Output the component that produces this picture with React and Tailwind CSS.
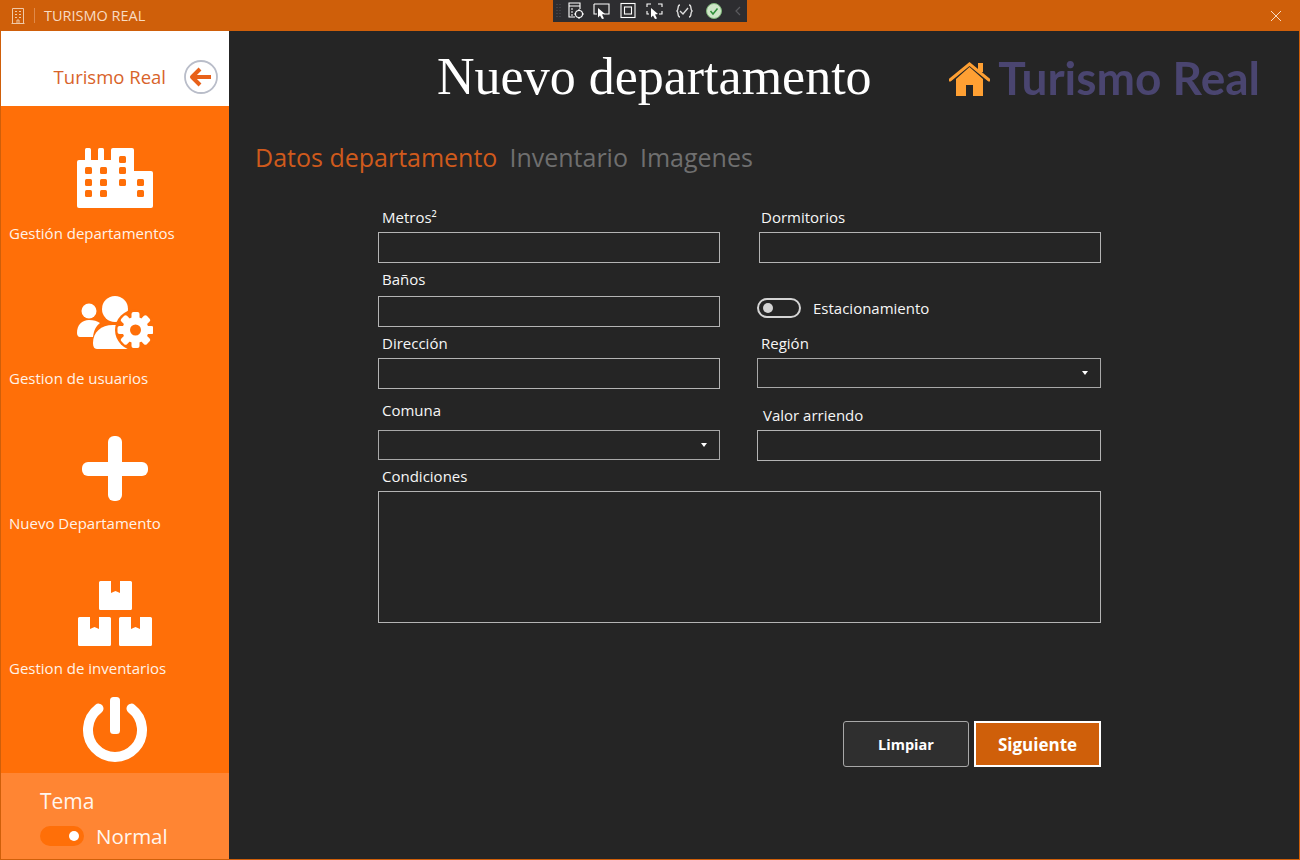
import React from "react";

const ui = { fontFamily: '"Open Sans", "Noto Sans", sans-serif' };

function BuildingIcon() {
  const windows = [
    [8, 19], [8, 31], [8, 42], [23, 19], [23, 31], [23, 42],
    [42, 8], [42, 19], [42, 31], [60, 31], [60, 42],
  ];
  return (
    <svg width="76" height="61" viewBox="0 0 76 61">
      <rect x="8" y="0" width="6" height="20" rx="1.5" fill="#fff" />
      <rect x="21" y="0" width="6" height="20" rx="1.5" fill="#fff" />
      <rect x="34" y="0" width="23" height="30" rx="2" fill="#fff" />
      <rect x="0" y="12" width="57" height="48" rx="2" fill="#fff" />
      <rect x="40" y="23" width="36" height="37" rx="2" fill="#fff" />
      {windows.map(([x, y]) => (
        <rect key={`${x}-${y}`} x={x} y={y} width="7" height="7" rx="1.5" fill="#ff6f08" />
      ))}
    </svg>
  );
}

function UsersIcon() {
  const teeth = [0, 45, 90, 135, 180, 225, 270, 315];
  return (
    <svg width="76" height="54" viewBox="0 0 76 54">
      <circle cx="12" cy="15" r="7.500" fill="#fff" />
      <path d="M0 37c0-8 5-13 12-13 5 0 8 1 11 3-4 3-6 7-7 14H3c-2 0-3-2-3-4z" fill="#fff" />
      <circle cx="38" cy="13" r="13" fill="#fff" />
      <path d="M16 47c0-11 8-18 20-18h4c8 0 14 4 17 10v14H20c-3 0-4-3-4-6z" fill="#fff" />
      <circle cx="58.500" cy="34" r="20.500" fill="#ff6f08" />
      {teeth.map((a) => (
        <rect key={a} x="54.500" y="16" width="8" height="8" rx="2" fill="#fff" transform={`rotate(${a} 58.500 34)`} />
      ))}
      <circle cx="58.500" cy="34" r="13" fill="#fff" />
      <circle cx="58.500" cy="34" r="5.500" fill="#ff6f08" />
    </svg>
  );
}

function PlusIcon() {
  return (
    <svg width="66" height="65" viewBox="0 0 66 65">
      <rect x="26" y="0" width="14" height="65" rx="6" fill="#fff" />
      <rect x="0" y="26" width="66" height="14" rx="6" fill="#fff" />
    </svg>
  );
}

function BoxesIcon() {
  const box = "M1.500 0H12V12L16.500 10 21 12V0h10.500A1.500 1.500 0 0 1 33 1.500v26a1.500 1.500 0 0 1-1.500 1.500h-30A1.500 1.500 0 0 1 0 27.500v-26A1.500 1.500 0 0 1 1.500 0z";
  return (
    <svg width="75" height="65" viewBox="0 0 75 65">
      <path d={box} transform="translate(21 0)" fill="#fff" />
      <path d={box} transform="translate(0 36)" fill="#fff" />
      <path d={box} transform="translate(41 36)" fill="#fff" />
    </svg>
  );
}

function PowerIcon() {
  return (
    <svg width="66" height="66" viewBox="0 0 66 66">
      <path d="M16.500 11.600a27 27 0 1 0 33 0" fill="none" stroke="#fff" strokeWidth="10" strokeLinecap="round" />
      <rect x="28" y="0" width="10" height="37" rx="3.500" fill="#fff" />
    </svg>
  );
}

function NavItem({ icon, label }) {
  return (
    <div className="h-[145px] flex flex-col">
      <div className="h-[70px] mt-[37px] flex items-center justify-center">{icon}</div>
      <div className="h-6 mt-2 pl-2 text-[15px] leading-6 text-[#fff3e8]">{label}</div>
    </div>
  );
}

function Toolbar() {
  const s = { fill: "none", stroke: "#fff", strokeWidth: 1.1 };
  return (
    <div className="absolute left-[553px] top-0 w-[194px] h-[22px] bg-[#2d2d30] flex items-center pl-[3px]">
      <svg width="188" height="18" viewBox="-12 0 188 18">
        <path d="M-11 2v14M-8 2v14" fill="none" stroke="#55555a" strokeWidth="1" strokeDasharray="1 2" />
        <path d="M1 1h11v3H1zM1 4v11h6M12 4v3" {...s} />
        <path d="M3 7h2M3 10h2M3 13h2" {...s} />
        <circle cx="11" cy="12" r="3.500" {...s} />
        <path d="M11 7v2M11 15v2M6 12h2M14 12h2" {...s} />
        <path d="M26 2h15v10h-5M26 2v10h3" {...s} />
        <path d="M30 6l7 6-3 .5 2 4-2 .5-2-3.500-2 2z" fill="#fff" />
        <rect x="53" y="1.500" width="14" height="14" {...s} />
        <rect x="56.500" y="5" width="7" height="7" {...s} />
        <path d="M79 5V2h4M90 2h4v3M79 9v3h2M94 9v3h-3" {...s} />
        <path d="M83 6l7 6-3 .5 2 4-2 .5-2-3.500-2 2z" fill="#fff" />
        <path d="M112 3c-3 0-1 4-3 6 2 2 0 6 3 6M121 3c3 0 1 4 3 6-2 2 0 6-3 6" fill="none" stroke="#ddd" strokeWidth="1.400" />
        <path d="M112 9l3 3 5-6" fill="none" stroke="#ddd" strokeWidth="1.400" />
        <circle cx="146" cy="9" r="7.500" fill="#cfe6c8" stroke="#7fb77a" />
        <path d="M142.500 9l2.500 3 4.500-5.500" fill="none" stroke="#2f8f3a" strokeWidth="1.500" />
        <path d="M172 5l-4 4 4 4" fill="none" stroke="#5a5a5e" strokeWidth="1.200" />
      </svg>
    </div>
  );
}

function Label({ children, className = "" }) {
  return <div className={`text-[15px] leading-5 text-[#f6f6f6] ${className}`}>{children}</div>;
}

function Field({ className = "" }) {
  return <div className={`border border-[#b4b4b4] bg-[#252525] ${className}`} />;
}

function SelectBox({ className = "" }) {
  return (
    <div className={`border border-[#a8a8a8] bg-[#252525] flex items-center justify-end pr-[12px] ${className}`}>
      <div className="w-0 h-0 border-l-[3px] border-r-[3px] border-t-[4px] border-l-transparent border-r-transparent border-t-white" />
    </div>
  );
}

export default function App() {
  return (
    <div className="w-[1300px] h-[860px] flex flex-col relative overflow-hidden bg-[#cf5f0a]" style={ui}>
      <div className="h-[31px] shrink-0 flex items-center bg-[#cf5f0a] pl-[11px] pr-[19px]">
        <svg width="14" height="16" viewBox="0 0 14 16" fill="none" stroke="#f0c9a8" strokeWidth="1">
          <path d="M1.500.5h11v15h-11zM.5 15.500h13" />
          <path d="M4 3.500h2M8 3.500h2M4 6.500h2M8 6.500h2M4 9.500h2M8 9.500h2M6 15v-3h2v3" />
        </svg>
        <div className="w-px h-[15px] bg-[#e08a4a] ml-[9px] mr-[9px]" />
        <span className="text-[14.5px] text-[#f8dcc4]">TURISMO REAL</span>
        <svg className="ml-auto" width="10" height="10" viewBox="0 0 10 10" stroke="#f8dcc4" strokeWidth="1">
          <path d="M0 0l10 10M10 0L0 10" />
        </svg>
      </div>
      <Toolbar />

      <div className="flex-1 flex min-h-0 px-px pb-px">
        <aside className="w-[228px] shrink-0 flex flex-col bg-[#ff6f08]">
          <div className="h-[75px] bg-white flex items-center justify-end pr-[11px] pt-[17px] gap-[18px]">
            <span className="text-[18.500px] text-[#d8632a]">Turismo Real</span>
            <svg width="34" height="34" viewBox="0 0 34 34">
              <circle cx="17" cy="17" r="16" fill="none" stroke="#b9bdc9" strokeWidth="1.800" />
              <path d="M16 9l-8 8 8 8M9 17h18" fill="none" stroke="#e8611a" strokeWidth="4" strokeLinejoin="round" />
            </svg>
          </div>
          <NavItem icon={<BuildingIcon />} label="Gestión departamentos" />
          <NavItem icon={<UsersIcon />} label="Gestion de usuarios" />
          <NavItem icon={<PlusIcon />} label="Nuevo Departamento" />
          <NavItem icon={<BoxesIcon />} label="Gestion de inventarios" />
          <div className="flex justify-center pt-[11px]">
            <PowerIcon />
          </div>
          <div className="mt-auto h-[86px] bg-[#ff8533] pl-[39px] pt-[13px]">
            <div className="text-[21px] leading-[30px] text-[#fff6ee]">Tema</div>
            <div className="flex items-center gap-3 mt-[9px]">
              <div className="w-[44px] h-[20px] rounded-full bg-[#ff6f08] flex items-center justify-end pr-[5px]">
                <div className="w-[10px] h-[10px] rounded-full bg-white" />
              </div>
              <span className="text-[20.500px] leading-[22px] text-[#fff6ee]">Normal</span>
            </div>
          </div>
        </aside>

        <main className="flex-1 bg-[#252525] flex flex-col">
          <div className="h-[94px] shrink-0 flex items-center pl-[208px] pr-[39px] justify-between">
            <h1 className="text-[52px] leading-none text-white mb-[2px]" style={{ fontFamily: '"Liberation Serif", serif' }}>
              Nuevo departamento
            </h1>
            <div className="flex items-center gap-[8px]">
              <svg width="41" height="36" viewBox="0 0 41 36">
                <path d="M7 19v17h10V25h7v11h10V19L20.500 7z" fill="#ffa033" />
                <path d="M1 20L20.500 4 40 20" fill="none" stroke="#ffa033" strokeWidth="3" strokeLinecap="round" />
                <rect x="29" y="3" width="5" height="9" fill="#ffa033" />
              </svg>
              <span className="text-[46px] leading-none font-bold text-[#4a4570] blur-[0.5px]" style={{ fontFamily: '"Lato", sans-serif' }}>
                Turismo Real
              </span>
            </div>
          </div>

          <div className="flex gap-3 pl-[26px] mt-[15px] h-[36px] items-center text-[25px]">
            <span className="text-[#cf5a1c]">Datos departamento</span>
            <span className="text-[#6f6f6f]">Inventario</span>
            <span className="text-[#6f6f6f]">Imagenes</span>
          </div>

          <form className="ml-[149px] w-[723px] mt-[31px] flex flex-col">
            <div className="grid grid-cols-[342px_344px] gap-x-[37px]">
              <div>
                <Label className="pl-[4px] h-5">Metros²</Label>
                <Field className="h-[31px] mt-[5px]" />
              </div>
              <div>
                <Label className="pl-[4px] h-5">Dormitorios</Label>
                <Field className="h-[31px] mt-[5px] ml-[2px]" />
              </div>
            </div>
            <div className="grid grid-cols-[342px_344px] gap-x-[37px] mt-[6px]">
              <div>
                <Label className="pl-[4px] h-5">Baños</Label>
                <Field className="h-[31px] mt-[7px]" />
              </div>
              <div className="flex items-center gap-3 pt-[20px]">
                <div className="w-[44px] h-[20px] rounded-full border-2 border-[#d4d4d4] flex items-center pl-[4px]">
                  <div className="w-[10px] h-[10px] rounded-full bg-[#d4d4d4]" />
                </div>
                <span className="text-[15px] text-[#f6f6f6]">Estacionamiento</span>
              </div>
            </div>
            <div className="grid grid-cols-[342px_344px] gap-x-[37px] mt-[6px]">
              <div>
                <Label className="pl-[4px] h-5">Dirección</Label>
                <Field className="h-[31px] mt-[5px]" />
              </div>
              <div>
                <Label className="pl-[4px] h-5">Región</Label>
                <SelectBox className="h-[30px] mt-[5px]" />
              </div>
            </div>
            <div className="grid grid-cols-[342px_344px] gap-x-[37px] mt-[11px]">
              <div>
                <Label className="pl-[4px] h-5">Comuna</Label>
                <SelectBox className="h-[30px] mt-[10px]" />
              </div>
              <div>
                <Label className="pl-[6px] h-5 mt-[5px]">Valor arriendo</Label>
                <Field className="h-[31px] mt-[5px]" />
              </div>
            </div>
            <Label className="pl-[4px] h-5 mt-[5px]">Condiciones</Label>
            <Field className="h-[132px] mt-[5px]" />
          </form>

          <div className="flex justify-end gap-[5px] pr-[198px] mt-[98px]">
            <button type="button" className="w-[126px] h-[46px] pt-[2px] rounded-[3px] border border-[#a8a8a8] bg-[#2f2f2f] text-white font-bold text-[14.500px]">
              Limpiar
            </button>
            <button type="button" className="w-[127px] h-[46px] pt-[2px] border-2 border-white bg-[#cf5f0a] text-white font-bold text-[17px]">
              Siguiente
            </button>
          </div>
        </main>
      </div>
    </div>
  );
}
